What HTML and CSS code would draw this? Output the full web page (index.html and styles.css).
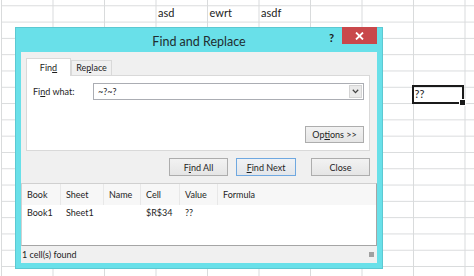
FILE: index.html
```html
<!DOCTYPE html>
<html lang="en">
<head>
  <meta charset="UTF-8">
  <title>Find and Replace</title>
  <link rel="stylesheet" href="styles.css">
</head>
<body>
  <div class="sheet">
    <div class="cell col-d row-2">asd</div>
    <div class="cell col-e row-2">ewrt</div>
    <div class="cell col-f row-2">asdf</div>
    <div class="cell col-i row-7 selected">??</div>
  </div>

  <div class="dialog">
    <div class="titlebar">
      <div></div>
      <div class="title">Find and Replace</div>
      <div class="title-btns">
        <span class="help">?</span>
        <span class="close-x">
          <svg width="9" height="8" viewBox="0 0 9 8"><path d="M1 0.5 L8 7.5 M8 0.5 L1 7.5" stroke="#fff" stroke-width="1.8"/></svg>
        </span>
      </div>
    </div>

    <div class="client">
      <div class="find-area">
        <div class="tabs">
          <div class="tab active">Fin<u>d</u></div>
          <div class="tab">Re<u>p</u>lace</div>
        </div>
        <div class="panel">
          <div class="find-row">
            <label>Fi<u>n</u>d what:</label>
            <div class="combo">
              <span class="combo-val">~?~?</span>
              <span class="combo-arrow">
                <svg width="7" height="5" viewBox="0 0 7 5"><path d="M0.8 0.8 L3.5 3.6 L6.2 0.8" fill="none" stroke="#444" stroke-width="1.3"/></svg>
              </span>
            </div>
          </div>
          <button class="btn options">Op<u>t</u>ions &gt;&gt;</button>
        </div>
        <div class="btn-row">
          <button class="btn w59">F<u>i</u>nd All</button>
          <button class="btn w60 default"><u>F</u>ind Next</button>
          <button class="btn w59 close-btn">Close</button>
        </div>
      </div>

      <div class="results">
        <div class="res-grid">
          <div class="hd">Book</div>
          <div class="hd">Sheet</div>
          <div class="hd">Name</div>
          <div class="hd">Cell</div>
          <div class="hd">Value</div>
          <div class="hd last">Formula</div>
          <div class="rc">Book1</div>
          <div class="rc">Sheet1</div>
          <div class="rc"></div>
          <div class="rc">$R$34</div>
          <div class="rc">??</div>
          <div class="rc"></div>
        </div>
      </div>
      <div class="status">
        <span>1 cell(s) found</span>
        <span class="grip"></span>
      </div>
    </div>
  </div>
</body>
</html>
```

FILE: styles.css
```css
body {
  margin: 0;
  width: 474px;
  height: 276px;
  overflow: hidden;
  position: relative;
  background: #fff;
  font-family: Lato, "Open Sans", sans-serif;
  color: #1e1e1e;
}
.sheet {
  display: grid;
  grid-template-columns: repeat(10, 51.5px);
  grid-template-rows: repeat(18, 16.3px);
  margin: -11.3px 0 0 0.5px;
  height: 300px;
  background-image:
    linear-gradient(to right, #d9dbdc 1px, transparent 1px),
    linear-gradient(to bottom, #d9dbdc 1px, transparent 1px);
  background-size: 51.5px 16.3px;
}
.cell {
  font-size: 11px;
  line-height: 16px;
  padding-left: 3px;
  color: #222;
}
.col-d { grid-column: 4; }
.col-e { grid-column: 5; }
.col-f { grid-column: 6; }
.col-i { grid-column: 9; }
.row-2 { grid-row: 2; }
.row-7 { grid-row: 7; }
.selected {
  position: relative;
  border: 2px solid #1a1a1a;
  margin: -1px 0 -1px -1px;
  line-height: 14px;
  padding-left: 1px;
}
.selected::after {
  content: "";
  position: absolute;
  right: -4px;
  bottom: -4px;
  width: 5px;
  height: 5px;
  background: #1a1a1a;
  border: 1px solid #fff;
}

/* dialog */
.dialog {
  position: absolute;
  left: 15px;
  top: 27px;
  width: 368px;
  height: 242px;
  box-sizing: border-box;
  background: #69e0e9;
  border: 1px solid #5cc9d2;
  padding: 0 5px 5px;
  display: flex;
  flex-direction: column;
}
.titlebar {
  height: 24px;
  display: grid;
  grid-template-columns: 1fr auto 1fr;
  align-items: start;
}
.title {
  font-size: 12.5px;
  padding-top: 6px;
  line-height: 16px;
  color: #1f2d30;
}
.title-btns {
  display: flex;
  justify-content: flex-end;
  align-items: start;
}
.help {
  font-size: 11px;
  font-weight: bold;
  padding-top: 3px;
  margin-right: 8px;
  color: #1a1a1a;
}
.close-x {
  width: 35px;
  height: 17px;
  margin-top: -1px;
  background: #c9484b;
  display: flex;
  align-items: center;
  justify-content: center;
}
.client {
  flex: 1;
  background: #f0f0f0;
  display: flex;
  flex-direction: column;
  font-size: 9px;
}
.find-area {
  padding: 6px 7px 0 5px;
}
.tabs {
  display: flex;
  align-items: flex-end;
  height: 17px;
}
.tab {
  width: 41px;
  height: 15px;
  box-sizing: border-box;
  border: 1px solid #d9d9d9;
  border-bottom: none;
  background: #f0f0f0;
  text-align: center;
  line-height: 14px;
}
.tab.active {
  width: 45px;
  height: 18px;
  background: #fff;
  margin-bottom: -1px;
  position: relative;
  line-height: 17px;
}
.panel {
  height: 76px;
  box-sizing: border-box;
  background: #fff;
  border: 1px solid #d9d9d9;
  padding: 7px 5px 7px 6px;
  display: flex;
  flex-direction: column;
  justify-content: space-between;
}
.find-row {
  display: flex;
  align-items: center;
}
.find-row label {
  width: 60px;
}
.combo {
  flex: 1;
  height: 17px;
  box-sizing: border-box;
  border: 1px solid #abadb3;
  display: flex;
  align-items: center;
  justify-content: space-between;
}
.combo-val {
  padding-left: 4px;
}
.combo-arrow {
  width: 13px;
  height: 13px;
  margin-right: 1px;
  box-sizing: border-box;
  border: 1px solid #d4d4d4;
  background: #eaeaea;
  display: flex;
  align-items: center;
  justify-content: center;
}
.btn {
  font-family: inherit;
  font-size: 9px;
  color: #1e1e1e;
  height: 17px;
  padding: 0;
  box-sizing: border-box;
  border: 1px solid #adadad;
  background: linear-gradient(#f2f2f2, #e5e5e5);
}
.options {
  width: 59px;
  align-self: flex-end;
}
.btn-row {
  display: flex;
  justify-content: flex-end;
  margin-top: 7px;
}
.btn-row .btn {
  height: 18px;
}
.w59 { width: 59px; }
.w60 { width: 60px; margin-left: 8px; }
.close-btn { margin-left: 15px; }
.default {
  border-color: #6fa8e0;
  background: linear-gradient(#f0f2f5, #e3e6ea);
}
.results {
  margin-top: 7px;
  height: 63px;
  box-sizing: border-box;
  background: #fff;
  border: 1px solid #a5a5a5;
  border-left-color: #d0d0d0;
  border-top-color: #d0d0d0;
}
.res-grid {
  display: grid;
  grid-template-columns: 39px 43px 37px 39px 38px 1fr;
  grid-template-rows: 21px 15px;
}
.hd {
  background: #f7f7f7;
  border-right: 1px solid #e8e8e8;
  padding-left: 5px;
  line-height: 21px;
}
.hd.last {
  border-right: none;
}
.rc {
  padding-left: 5px;
  line-height: 15px;
}
.status {
  height: 17px;
  display: flex;
  align-items: center;
  justify-content: space-between;
  padding-left: 1px;
}
.grip {
  width: 5px;
  height: 5px;
  margin: 0 3px 0 0;
  background-image: radial-gradient(circle, #9a9a9a 0.7px, transparent 0.8px);
  background-size: 2px 2px;
}
```
